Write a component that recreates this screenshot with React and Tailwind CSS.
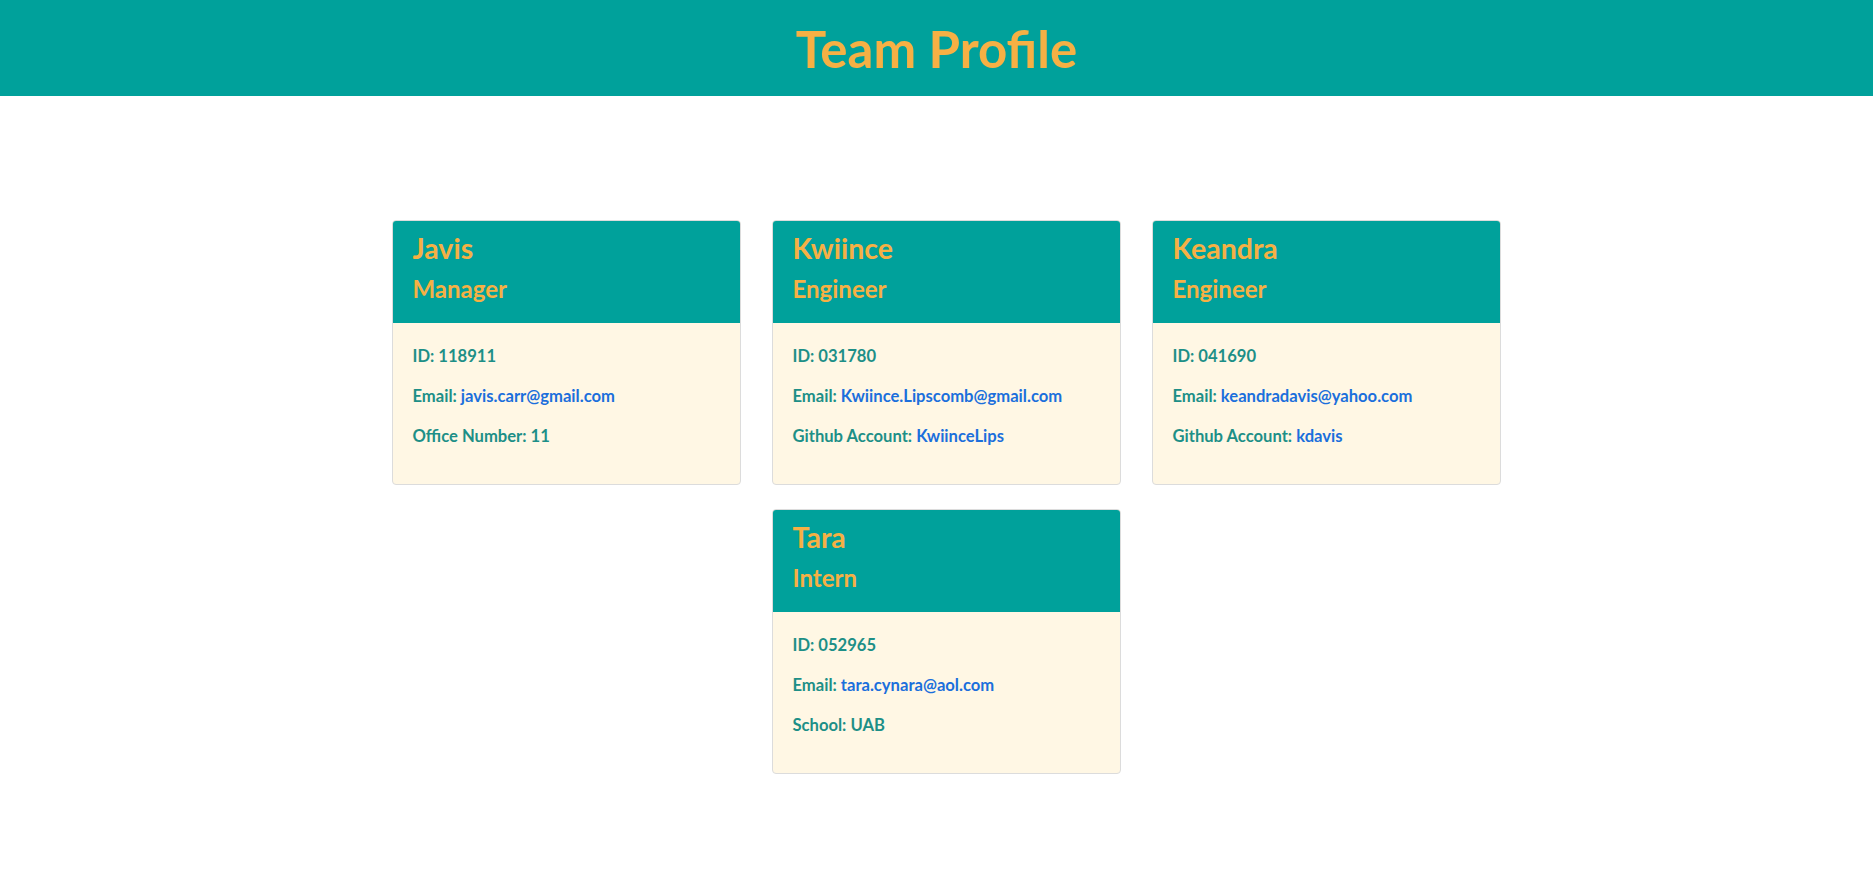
// Team Profile page — header bar plus employee cards

const team = [
  {
    name: "Javis",
    role: "Manager",
    id: "118911",
    email: "javis.carr@gmail.com",
    extra: { label: "Office Number:", value: "11" },
  },
  {
    name: "Kwiince",
    role: "Engineer",
    id: "031780",
    email: "Kwiince.Lipscomb@gmail.com",
    extra: { label: "Github Account:", value: "KwiinceLips", link: true },
  },
  {
    name: "Keandra",
    role: "Engineer",
    id: "041690",
    email: "keandradavis@yahoo.com",
    extra: { label: "Github Account:", value: "kdavis", link: true },
  },
  {
    name: "Tara",
    role: "Intern",
    id: "052965",
    email: "tara.cynara@aol.com",
    extra: { label: "School:", value: "UAB" },
  },
];

const EmployeeCard = ({ person }) => (
  <div className="w-[349px] border border-[#dcdcdc] rounded-[4px] overflow-hidden bg-[#fff7e4]">
    {/* Card header */}
    <div className="bg-[#00a19b] px-5 pt-[9px] pb-[18px] text-[#f6b044] font-bold">
      <h2 className="text-[28.5px] leading-[36px]">{person.name}</h2>
      <h3 className="mt-[7px] text-[24px] leading-8">{person.role}</h3>
    </div>

    {/* Card body */}
    <div className="px-5 pt-[21px] pb-5 text-[16.6px] font-bold text-[#1d8f87]">
      <p className="leading-6 mb-4">ID: {person.id}</p>
      <p className="leading-6 mb-4">
        Email: <a className="text-[#1b6fdc]">{person.email}</a>
      </p>
      <p className="leading-6 mb-4">
        {person.extra.label}{" "}
        {person.extra.link ? (
          <a className="text-[#1b6fdc]">{person.extra.value}</a>
        ) : (
          person.extra.value
        )}
      </p>
    </div>
  </div>
);

export default function App() {
  return (
    <div
      className="min-h-screen bg-white"
      style={{ fontFamily: "Lato, 'Open Sans', sans-serif" }}
    >
      {/* Top bar */}
      <header className="h-[96px] bg-[#00a19b] flex items-center justify-center">
        <h1 className="text-[51px] font-bold text-[#f6b044] leading-none">
          Team Profile
        </h1>
      </header>

      {/* Cards */}
      <main className="pt-[124px] pl-[19px] flex justify-center">
        <div className="w-[1109px] flex flex-wrap justify-center gap-x-[31px] gap-y-[24px]">
          {team.map((p) => (
            <EmployeeCard key={p.name} person={p} />
          ))}
        </div>
      </main>
    </div>
  );
}
